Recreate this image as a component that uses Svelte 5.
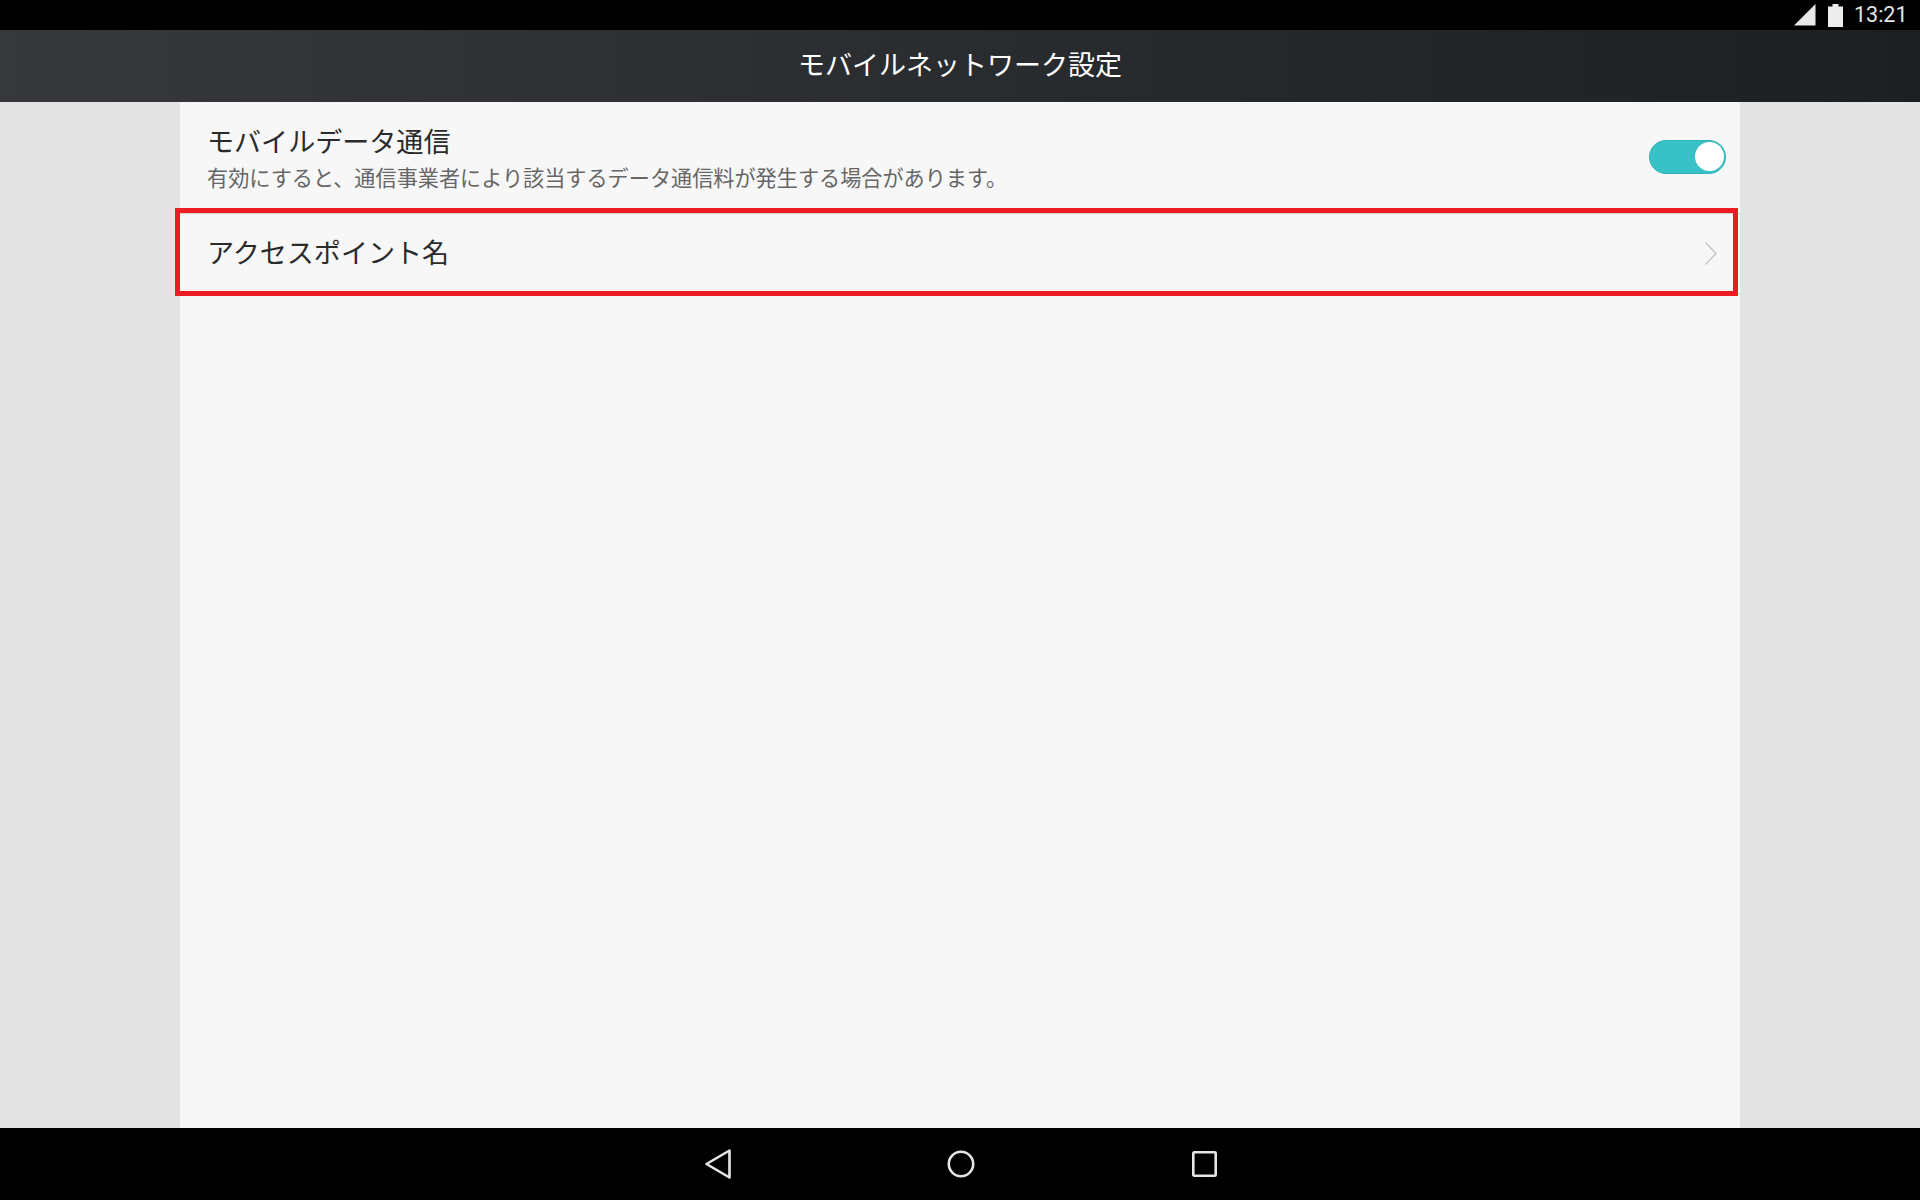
<script>
	let mobileData = $state(true);
</script>

<div class="screen">
	<div class="status-bar">
		<svg class="signal" width="22" height="22" viewBox="0 0 22 22"><path d="M0 21.5 21.5 0v21.5z" fill="#e8e8e8" /></svg>
		<svg class="battery" width="15" height="23" viewBox="0 0 15 23"><path d="M4.5 0h6v2.5H15V23H0V2.5h4.5z" fill="#ececec" /></svg>
		<span class="time">13:21</span>
	</div>

	<header class="action-bar">モバイルネットワーク設定</header>

	<main class="content">
		<div class="panel">
			<div class="row row-data">
				<div class="row-text">
					<div class="row-title">モバイルデータ通信</div>
					<div class="row-sub">有効にすると、通信事業者により該当するデータ通信料が発生する場合があります。</div>
				</div>
				<button class="toggle" class:off={!mobileData} aria-label="モバイルデータ通信" onclick={() => (mobileData = !mobileData)}>
					<span class="knob"></span>
				</button>
			</div>
			<div class="row row-apn">
				<div class="row-title apn-title">アクセスポイント名</div>
				<svg class="chevron" width="12" height="23" viewBox="0 0 12 23"><path d="M.6.6 11 11.5.6 22.4" fill="none" stroke="#c4c4c4" stroke-width="1.4" /></svg>
				<div class="highlight"></div>
			</div>
		</div>
	</main>

	<nav class="nav-bar">
		<svg width="26" height="30" viewBox="0 0 26 30"><path d="M24.5 1.5v27L1.5 15z" fill="none" stroke="#e6e6e6" stroke-width="2.6" stroke-linejoin="round" /></svg>
		<svg width="28" height="28" viewBox="0 0 28 28"><circle cx="14" cy="14" r="12.2" fill="none" stroke="#e6e6e6" stroke-width="2.6" /></svg>
		<svg width="25" height="26" viewBox="0 0 25 26"><rect x="1.3" y="1.3" width="22.4" height="23.4" rx="1" fill="none" stroke="#e6e6e6" stroke-width="2.6" /></svg>
	</nav>
</div>

<style>
	:global(body) {
		margin: 0;
		font-family: "Noto Sans CJK JP", "Noto Sans", sans-serif;
	}

	.screen {
		display: flex;
		flex-direction: column;
		width: 1920px;
		height: 1200px;
		background: #e3e3e3;
		overflow: hidden;
	}

	.status-bar {
		display: flex;
		align-items: center;
		justify-content: flex-end;
		flex: none;
		height: 30px;
		padding-right: 13px;
		background: #000;
	}

	.signal {
		margin-right: 12px;
	}

	.battery {
		margin-right: 11px;
	}

	.time {
		width: 53px;
		color: #e4e4e4;
		font-family: Roboto, sans-serif;
		font-size: 21.5px;
		line-height: 30px;
	}

	.action-bar {
		flex: none;
		height: 72px;
		background: linear-gradient(90deg, #37383b, #1c2023);
		color: #fff;
		font-size: 27px;
		line-height: 68px;
		text-align: center;
	}

	.content {
		flex: 1;
		display: flex;
		justify-content: center;
		min-height: 0;
	}

	.panel {
		width: 1560px;
		background: #f7f7f7;
	}

	.row {
		display: flex;
		align-items: center;
		justify-content: space-between;
		box-sizing: border-box;
		position: relative;
		padding: 0 23px 0 27px;
		border-bottom: 1px solid #d2d2d2;
	}

	.row-data {
		height: 112px;
		padding-right: 14px;
		padding-bottom: 2px;
	}

	.row-apn {
		height: 80px;
	}

	.row-title {
		color: #2b2b2b;
		font-size: 27.05px;
		line-height: 36px;
	}

	.apn-title {
		padding-bottom: 3px;
	}

	.row-sub {
		margin-top: 3px;
		margin-bottom: -1px;
		color: #666;
		font-size: 21.15px;
		line-height: 30px;
	}

	.toggle {
		display: flex;
		align-items: center;
		justify-content: flex-end;
		box-sizing: border-box;
		width: 77px;
		height: 34px;
		padding: 0 1px 0 0;
		border: 1px solid #2fb2b8;
		border-radius: 17px;
		background: #38c1c7;
	}

	.toggle.off {
		justify-content: flex-start;
		background: #ccc;
		border-color: #bbb;
	}

	.knob {
		width: 29px;
		height: 29px;
		border-radius: 50%;
		background: #fff;
	}

	.highlight {
		position: absolute;
		left: -5px;
		right: 2px;
		top: -6px;
		bottom: -3px;
		border: 5px solid #ed1c24;
		pointer-events: none;
	}

	.nav-bar {
		display: grid;
		grid-template-columns: repeat(3, 243px);
		justify-content: center;
		justify-items: center;
		align-items: center;
		flex: none;
		height: 72px;
		padding: 0 0 0 2px;
		box-sizing: border-box;
		background: #000;
	}
</style>
